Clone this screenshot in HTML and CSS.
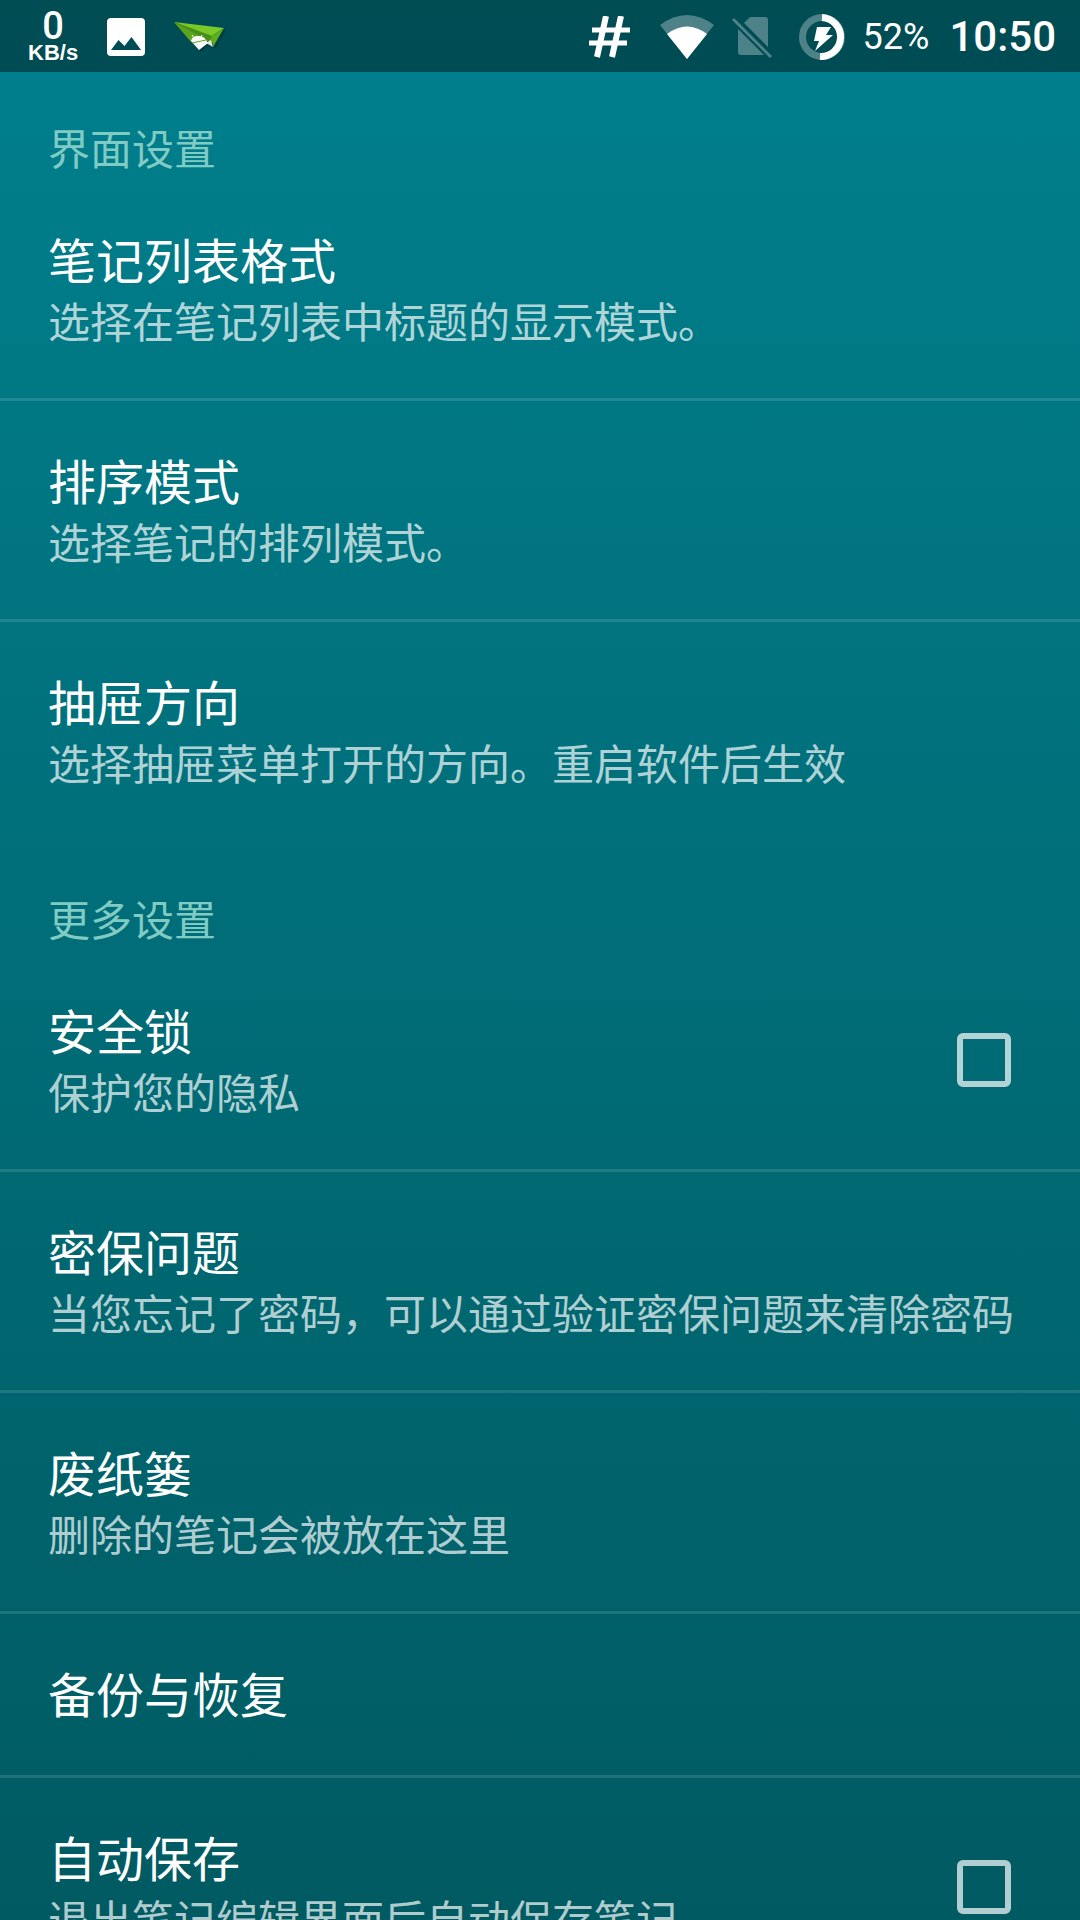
FILE: index.html
```html
<!DOCTYPE html>
<html lang="zh-CN">
<head>
<meta charset="utf-8">
<meta name="viewport" content="width=device-width, initial-scale=1">
<title>设置</title>
<link rel="stylesheet" href="styles.css">
</head>
<body>
<div class="screen">
  <header class="status-bar">
    <div class="status-group status-left">
      <div class="net-speed"><span class="net-value">0</span><span class="net-unit">KB/s</span></div>
      <svg class="icon-photo" viewBox="0 0 38 38" aria-hidden="true"><path fill="#fff" fill-rule="evenodd" d="M4 0H34a4 4 0 0 1 4 4V34a4 4 0 0 1-4 4H4a4 4 0 0 1-4-4V4a4 4 0 0 1 4-4ZM4 32H34L24.500 19L17.500 28L11.500 22Z"/></svg>
      <svg class="icon-plane" viewBox="0 0 52 32" aria-hidden="true">
        <path fill="#003338" opacity=".6" d="M2 3L52 9L42 28L34 25L27 31Z"/>
        <path fill="#5aa51d" d="M0 1L17 21L26 16L38 23L41 15Z"/>
        <path fill="#7bc928" d="M0 1L50 7L38 15Z"/>
        <path fill="#4b8d19" d="M0 1L38 15L35 20Z"/>
        <path fill="#5cae1c" d="M50 7L38 15L39 26Z"/>
        <path fill="#dfe6df" d="M32 22L37 19L39 26Z"/>
        <path fill="#fff" d="M17 20Q18 15 24 15Q30 15 32 19L34 22L25 29Z"/>
        <path stroke="#fff" d="M18 14L20 17M28 14L27 17" fill="none"/>
        <path stroke="#5aa51d" stroke-width="1" d="M18 22L32 19" fill="none"/>
      </svg>
    </div>
    <div class="status-group status-right">
      <svg class="icon-hash" viewBox="0 0 42 42" aria-hidden="true"><path fill="none" stroke="#fff" stroke-width="6" d="M17 0L8 41M32 0L23 41"/><path fill="none" stroke="#fff" stroke-width="5" d="M3 14H41M0 27H38"/></svg>
      <svg class="icon-wifi" viewBox="0 0 54 44" aria-hidden="true"><path fill="#4d8288" d="M27 44L0 10Q27-10 54 10Z"/><path fill="#fff" d="M27 44L7 19Q27 4 47 19Z"/></svg>
      <svg class="icon-sim" viewBox="0 0 40 42" aria-hidden="true"><path fill="#4d8288" d="M12 7L18 1H33a3 3 0 0 1 3 3V31ZM6 13L32 39H9a3 3 0 0 1-3-3Z"/><path stroke="#4d8288" stroke-width="3" d="M1 3L39 41"/></svg>
      <svg class="icon-battery" viewBox="0 0 46 46" aria-hidden="true"><circle cx="23" cy="23" r="19.500" fill="none" stroke="#4d8288" stroke-width="7"/><path fill="none" stroke="#fff" stroke-width="7" d="M23 3.500A19.500 19.500 0 0 1 21 42.500"/><path fill="#fff" d="M18 13H32L27 21H34L16 37L20 27H15Z"/></svg>
      <span class="battery-level">52%</span>
      <time class="clock">10:50</time>
    </div>
  </header>
  <main class="settings">
    <section class="group">
      <h2 class="group-title">界面设置</h2>
      <a class="row" href="#list-format"><span class="row-text"><span class="row-title">笔记列表格式</span><span class="row-summary">选择在笔记列表中标题的显示模式。</span></span></a>
      <a class="row" href="#sort"><span class="row-text"><span class="row-title">排序模式</span><span class="row-summary">选择笔记的排列模式。</span></span></a>
      <a class="row" href="#drawer"><span class="row-text"><span class="row-title">抽屉方向</span><span class="row-summary">选择抽屉菜单打开的方向。重启软件后生效</span></span></a>
    </section>
    <section class="group">
      <h2 class="group-title">更多设置</h2>
      <label class="row" for="lock"><span class="row-text"><span class="row-title">安全锁</span><span class="row-summary">保护您的隐私</span></span><input class="check" type="checkbox" id="lock"></label>
      <a class="row" href="#question"><span class="row-text"><span class="row-title">密保问题</span><span class="row-summary">当您忘记了密码，可以通过验证密保问题来清除密码</span></span></a>
      <a class="row" href="#trash"><span class="row-text"><span class="row-title">废纸篓</span><span class="row-summary">删除的笔记会被放在这里</span></span></a>
      <a class="row" href="#backup"><span class="row-text"><span class="row-title">备份与恢复</span></span></a>
      <label class="row" for="autosave"><span class="row-text"><span class="row-title">自动保存</span><span class="row-summary">退出笔记编辑界面后自动保存笔记</span></span><input class="check" type="checkbox" id="autosave"></label>
    </section>
  </main>
</div>
</body>
</html>
```

FILE: styles.css
```css
* { box-sizing: border-box; }

body {
  margin: 0;
  color: #fff;
  font-family: Roboto, "Noto Sans CJK SC", sans-serif;
}

.screen {
  display: flex;
  flex-direction: column;
  height: 100vh;
  overflow: hidden;
  background: linear-gradient(#00808d, #005a62);
}

.status-bar {
  display: flex;
  flex: none;
  justify-content: space-between;
  align-items: center;
  height: 72px;
  padding: 2px 24px 0 28px;
  background: rgba(0, 0, 0, 0.4);
}

.status-group { display: flex; align-items: center; }
.status-left { gap: 29px; }

.net-speed {
  display: flex;
  flex-direction: column;
  align-items: center;
  font-family: "Liberation Sans", sans-serif;
  font-weight: 700;
}
.net-value { font-family: Roboto, sans-serif; font-weight: 500; font-size: 38px; line-height: 32px; }
.net-unit { font-size: 22px; line-height: 22px; }

.icon-photo { width: 38px; height: 38px; }
.icon-plane { width: 52px; height: 32px; }
.icon-hash { width: 42px; height: 42px; margin-right: 29px; }
.icon-wifi { width: 54px; height: 44px; margin-right: 18px; }
.icon-sim { width: 40px; height: 42px; margin-right: 27px; }
.icon-battery { width: 46px; height: 46px; margin-right: 18px; }
.battery-level { margin-right: 20px; font-size: 36px; line-height: 42px; }
.clock { font-weight: 500; font-size: 42px; line-height: 48px; }

.settings { flex: 1; min-height: 0; overflow: hidden; }

.group-title {
  margin: 0;
  padding: 50px 48px 1px;
  color: #80cbc4;
  font-weight: 400;
  font-size: 42px;
  line-height: 57px;
}

.row {
  display: flex;
  align-items: center;
  justify-content: space-between;
  padding: 0 69px 0 48px;
  border-bottom: 3px solid rgba(255, 255, 255, 0.12);
  color: inherit;
  text-decoration: none;
}
.group:first-child .row:last-child { border-color: transparent; }

.row-text { display: flex; flex-direction: column; padding: 50px 0 46px; white-space: nowrap; }
.row-title { font-size: 48px; line-height: 65px; }
.row-summary { color: rgba(255, 255, 255, 0.7); font-size: 42px; line-height: 57px; }

.check {
  flex: none;
  appearance: none;
  width: 54px;
  height: 54px;
  margin: 0;
  border: 6px solid rgba(255, 255, 255, 0.7);
  border-radius: 6px;
}
.check:checked { background: rgba(255, 255, 255, 0.7); }
```
